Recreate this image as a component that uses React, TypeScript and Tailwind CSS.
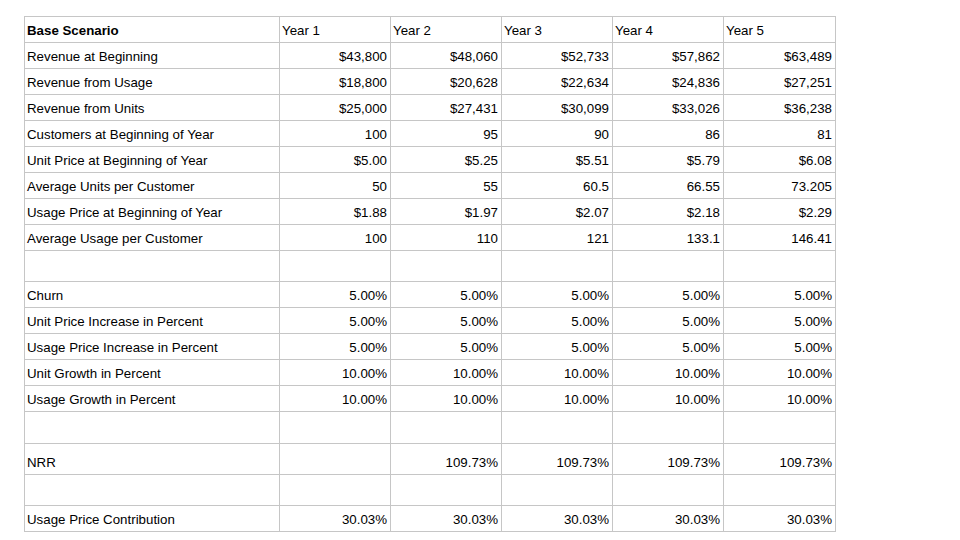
const years = ['Year 1', 'Year 2', 'Year 3', 'Year 4', 'Year 5'];

type Row = { label: string; values: string[]; h: string };

const rows: Row[] = [
  { label: 'Revenue at Beginning', values: ['$43,800', '$48,060', '$52,733', '$57,862', '$63,489'], h: 'h-[26px]' },
  { label: 'Revenue from Usage', values: ['$18,800', '$20,628', '$22,634', '$24,836', '$27,251'], h: 'h-[26px]' },
  { label: 'Revenue from Units', values: ['$25,000', '$27,431', '$30,099', '$33,026', '$36,238'], h: 'h-[26px]' },
  { label: 'Customers at Beginning of Year', values: ['100', '95', '90', '86', '81'], h: 'h-[26px]' },
  { label: 'Unit Price at Beginning of Year', values: ['$5.00', '$5.25', '$5.51', '$5.79', '$6.08'], h: 'h-[26px]' },
  { label: 'Average Units per Customer', values: ['50', '55', '60.5', '66.55', '73.205'], h: 'h-[26px]' },
  { label: 'Usage Price at Beginning of Year', values: ['$1.88', '$1.97', '$2.07', '$2.18', '$2.29'], h: 'h-[26px]' },
  { label: 'Average Usage per Customer', values: ['100', '110', '121', '133.1', '146.41'], h: 'h-[26px]' },
  { label: '', values: ['', '', '', '', ''], h: 'h-[31px]' },
  { label: 'Churn', values: ['5.00%', '5.00%', '5.00%', '5.00%', '5.00%'], h: 'h-[26px]' },
  { label: 'Unit Price Increase in Percent', values: ['5.00%', '5.00%', '5.00%', '5.00%', '5.00%'], h: 'h-[26px]' },
  { label: 'Usage Price Increase in Percent', values: ['5.00%', '5.00%', '5.00%', '5.00%', '5.00%'], h: 'h-[26px]' },
  { label: 'Unit Growth in Percent', values: ['10.00%', '10.00%', '10.00%', '10.00%', '10.00%'], h: 'h-[26px]' },
  { label: 'Usage Growth in Percent', values: ['10.00%', '10.00%', '10.00%', '10.00%', '10.00%'], h: 'h-[26px]' },
  { label: '', values: ['', '', '', '', ''], h: 'h-[32px]' },
  { label: 'NRR', values: ['', '109.73%', '109.73%', '109.73%', '109.73%'], h: 'h-[31px]' },
  { label: '', values: ['', '', '', '', ''], h: 'h-[31px]' },
  { label: 'Usage Price Contribution', values: ['30.03%', '30.03%', '30.03%', '30.03%', '30.03%'], h: 'h-[26px]' },
];

export default function App() {
  return (
    <div
      className="w-[960px] h-[540px] bg-white pl-[24px] pt-[16px] text-[13.3px] text-black"
      style={{ fontFamily: '"Liberation Sans", Arial, sans-serif' }}
    >
      <table className="table-fixed border-collapse w-[811px]">
        <colgroup>
          <col className="w-[255px]" />
          <col className="w-[111px]" />
          <col className="w-[111px]" />
          <col className="w-[111px]" />
          <col className="w-[111px]" />
          <col className="w-[112px]" />
        </colgroup>
        <tbody>
          <tr className="h-[26px]">
            <td className="border border-[#c6c6c6] pl-[2px] pr-[3px] pb-[3px] align-bottom font-bold leading-[16px]">
              Base Scenario
            </td>
            {years.map((y) => (
              <td key={y} className="border border-[#c6c6c6] pl-[2px] pr-[3px] pb-[3px] align-bottom leading-[16px]">
                {y}
              </td>
            ))}
          </tr>
          {rows.map((r, i) => (
            <tr key={i} className={r.h}>
              <td className="border border-[#c6c6c6] pl-[2px] pr-[3px] pb-[3px] align-bottom leading-[16px]">
                {r.label}
              </td>
              {r.values.map((v, j) => (
                <td
                  key={j}
                  className="border border-[#c6c6c6] pl-[2px] pr-[3px] pb-[3px] align-bottom text-right leading-[16px]"
                >
                  {v}
                </td>
              ))}
            </tr>
          ))}
        </tbody>
      </table>
    </div>
  );
}
